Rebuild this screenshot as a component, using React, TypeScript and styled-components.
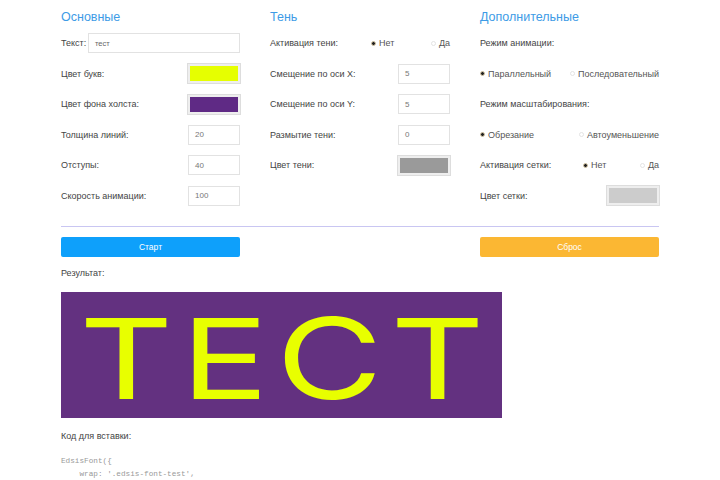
import React from "react";
import styled, { createGlobalStyle } from "styled-components";

const Global = createGlobalStyle`
  html, body { margin: 0; padding: 0; background: #fff; }
  body { font-family: "Liberation Sans", Arial, sans-serif; color: #444; }
`;

const Page = styled.div`
  width: 720px;
  height: 480px;
  overflow: hidden;
  padding: 9px 0 0 61px;
  box-sizing: border-box;
`;

const Columns = styled.div`
  display: grid;
  grid-template-columns: 179px 180px 179px;
  column-gap: 30px;
`;

const Column = styled.div`
  display: flex;
  flex-direction: column;
`;

const Heading = styled.h2`
  margin: 0 0 8px;
  font-size: 12.5px;
  line-height: 16px;
  font-weight: normal;
  color: #3d9be6;
`;

const Rows = styled.div`
  display: flex;
  flex-direction: column;
  gap: 10.6px;
`;

const Row = styled.div`
  height: 20px;
  display: flex;
  align-items: center;
  justify-content: space-between;
  font-size: 9px;
  color: #444;
  white-space: nowrap;
`;

const Label = styled.span`
  font-size: 9px;
`;

const TextInput = styled.div`
  flex: 0 0 152px;
  height: 20px;
  box-sizing: border-box;
  border: 1px solid #e2e2e2;
  font-size: 7.5px;
  color: #666;
  display: flex;
  align-items: center;
  padding-left: 6px;
`;

const NumInput = styled.div`
  width: 52px;
  height: 20px;
  box-sizing: border-box;
  border: 1px solid #e2e2e2;
  font-size: 8px;
  color: #777;
  display: flex;
  align-items: center;
  padding-left: 6px;
`;

const Swatch = styled.div<{ $color: string }>`
  width: 52px;
  height: 19px;
  box-sizing: border-box;
  border: 2px solid #eee;
  background: ${(p) => p.$color};
  box-shadow: 0 0 0 1px #ddd;
`;

const RadioGroup = styled.div<{ $width?: number }>`
  display: flex;
  justify-content: space-between;
  align-items: center;
  width: ${(p) => (p.$width ? `${p.$width}px` : "100%")};
`;

const Option = styled.span`
  display: inline-flex;
  align-items: center;
  gap: 3px;
  font-size: 9px;
  color: #555;
`;

const Dot = styled.span<{ $on?: boolean }>`
  width: 5px;
  height: 5px;
  border-radius: 50%;
  box-sizing: border-box;
  border: 1px solid ${(p) => (p.$on ? "#d8c9a8" : "#e4e4e4")};
  background: ${(p) => (p.$on ? "#222" : "#fff")};
`;

const Divider = styled.div`
  width: 598px;
  height: 1px;
  background: #c9c6f2;
  margin-top: 20px;
`;

const Buttons = styled.div`
  display: grid;
  grid-template-columns: 179px 180px 179px;
  column-gap: 30px;
  margin-top: 10px;
`;

const Button = styled.div<{ $bg: string; $col: number }>`
  grid-column: ${(p) => p.$col};
  height: 20px;
  border-radius: 2px;
  background: ${(p) => p.$bg};
  color: #fff;
  font-size: 8.5px;
  display: flex;
  align-items: center;
  justify-content: center;
`;

const Caption = styled.div<{ $mt: number }>`
  font-size: 9px;
  line-height: 12px;
  color: #444;
  margin-top: ${(p) => p.$mt}px;
`;

const Canvas = styled.div`
  width: 441px;
  height: 126px;
  margin-top: 13px;
  background: #633180;
  display: flex;
  align-items: center;
  justify-content: center;
  padding-top: 6px;
  box-sizing: border-box;
`;

const CanvasText = styled.span`
  font-family: Inter, "DejaVu Sans", sans-serif;
  font-weight: 380;
  font-size: 112px;
  line-height: 1;
  color: #e8ff00;
  letter-spacing: 6px;
  padding-left: 6px;
  white-space: nowrap;
  transform: scaleX(1.3);
`;

const Code = styled.pre`
  margin: 13px 0 0;
  font-family: "Liberation Mono", "DejaVu Sans Mono", monospace;
  font-size: 7.7px;
  line-height: 13px;
  color: #999;
`;

export default function App() {
  return (
    <>
      <Global />
      <Page>
        <Columns>
          <Column>
            <Heading>Основные</Heading>
            <Rows>
              <Row>
                <Label>Текст:</Label>
                <TextInput>тест</TextInput>
              </Row>
              <Row>
                <Label>Цвет букв:</Label>
                <Swatch $color="#e6ff00" />
              </Row>
              <Row>
                <Label>Цвет фона холста:</Label>
                <Swatch $color="#5f2a85" />
              </Row>
              <Row>
                <Label>Толщина линий:</Label>
                <NumInput>20</NumInput>
              </Row>
              <Row>
                <Label>Отступы:</Label>
                <NumInput>40</NumInput>
              </Row>
              <Row>
                <Label>Скорость анимации:</Label>
                <NumInput>100</NumInput>
              </Row>
            </Rows>
          </Column>
          <Column>
            <Heading>Тень</Heading>
            <Rows>
              <Row>
                <Label>Активация тени:</Label>
                <RadioGroup $width={79}>
                  <Option>
                    <Dot $on />
                    Нет
                  </Option>
                  <Option>
                    <Dot />
                    Да
                  </Option>
                </RadioGroup>
              </Row>
              <Row>
                <Label>Смещение по оси X:</Label>
                <NumInput>5</NumInput>
              </Row>
              <Row>
                <Label>Смещение по оси Y:</Label>
                <NumInput>5</NumInput>
              </Row>
              <Row>
                <Label>Размытие тени:</Label>
                <NumInput>0</NumInput>
              </Row>
              <Row>
                <Label>Цвет тени:</Label>
                <Swatch $color="#9a9a9a" />
              </Row>
            </Rows>
          </Column>
          <Column>
            <Heading>Дополнительные</Heading>
            <Rows>
              <Row>
                <Label>Режим анимации:</Label>
              </Row>
              <Row>
                <RadioGroup>
                  <Option>
                    <Dot $on />
                    Параллельный
                  </Option>
                  <Option>
                    <Dot />
                    Последовательный
                  </Option>
                </RadioGroup>
              </Row>
              <Row>
                <Label>Режим масштабирования:</Label>
              </Row>
              <Row>
                <RadioGroup>
                  <Option>
                    <Dot $on />
                    Обрезание
                  </Option>
                  <Option>
                    <Dot />
                    Автоуменьшение
                  </Option>
                </RadioGroup>
              </Row>
              <Row>
                <Label>Активация сетки:</Label>
                <RadioGroup $width={76}>
                  <Option>
                    <Dot $on />
                    Нет
                  </Option>
                  <Option>
                    <Dot />
                    Да
                  </Option>
                </RadioGroup>
              </Row>
              <Row>
                <Label>Цвет сетки:</Label>
                <Swatch $color="#cccccc" />
              </Row>
            </Rows>
          </Column>
        </Columns>
        <Divider />
        <Buttons>
          <Button $bg="#0ea0fb" $col={1}>Старт</Button>
          <Button $bg="#fbb733" $col={3}>Сброс</Button>
        </Buttons>
        <Caption $mt={10}>Результат:</Caption>
        <Canvas>
          <CanvasText>ТЕСТ</CanvasText>
        </Canvas>
        <Caption $mt={12}>Код для вставки:</Caption>
        <Code>{`EdsisFont({
    wrap: '.edsis-font-test',`}</Code>
      </Page>
    </>
  );
}
